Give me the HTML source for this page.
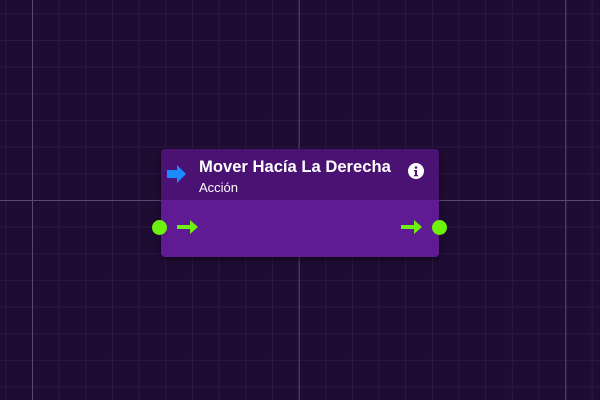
<!DOCTYPE html>
<html><head><style>
body{margin:0;width:600px;height:400px;overflow:hidden;background:#1f0c33;font-family:"Liberation Sans",sans-serif;position:relative}
.grid{position:absolute;inset:0;
background-image:
linear-gradient(to right,#5a4773 1px,transparent 1px),
linear-gradient(to bottom,#5a4773 1px,transparent 1px),
linear-gradient(to right,#2c1a43 1px,transparent 1px),
linear-gradient(to bottom,#2c1a43 1px,transparent 1px);
background-size:266.67px 266.67px,266.67px 266.67px,26.667px 26.667px,26.667px 26.667px;
background-position:32px 0,0 200px,5.33px 0,0 13.33px;}
.node{position:absolute;left:161px;top:149px;width:278px;height:108px;border-radius:4px;background:#5f1a94;box-shadow:0 2px 6px rgba(0,0,0,.6);overflow:hidden}
.hdr{height:51px;background:#4a1272;position:relative}
.t{position:absolute;left:38px;top:8px;color:#fff;font-weight:bold;font-size:16.6px}
.s{position:absolute;left:38px;top:31px;color:#fff;font-size:13px}
.dot{position:absolute;width:15px;height:15px;border-radius:50%;background:#6cf20c;top:220px}
</style></head><body>
<div class="grid"></div>
<div class="node"><div class="hdr">
<svg style="position:absolute;left:6px;top:16px" width="20" height="18" viewBox="0 0 20 18"><path d="M0 5h10V0l9 9-9 9v-5H0z" fill="#1a8cff"/></svg>
<div class="t">Mover Hacía La Derecha</div>
<div class="s">Acción</div>
<svg style="position:absolute;left:247px;top:14px" width="16" height="16" viewBox="0 0 16 16"><circle cx="8" cy="8" r="8" fill="#fff"/><circle cx="8" cy="4.5" r="1.3" fill="#4a1272"/><path d="M6 7h3v5h1v1.3H6V12h1V8.3H6z" fill="#4a1272"/></svg>
</div>
<svg style="position:absolute;left:16px;top:71px" width="22" height="14" viewBox="0 0 22 14"><path d="M0 5h13V0l8 7-8 7V9H0z" fill="#6cf20c"/></svg>
<svg style="position:absolute;left:240px;top:71px" width="22" height="14" viewBox="0 0 22 14"><path d="M0 5h13V0l8 7-8 7V9H0z" fill="#6cf20c"/></svg>
</div>
<div class="dot" style="left:152px"></div>
<div class="dot" style="left:432px"></div>
</body></html>
